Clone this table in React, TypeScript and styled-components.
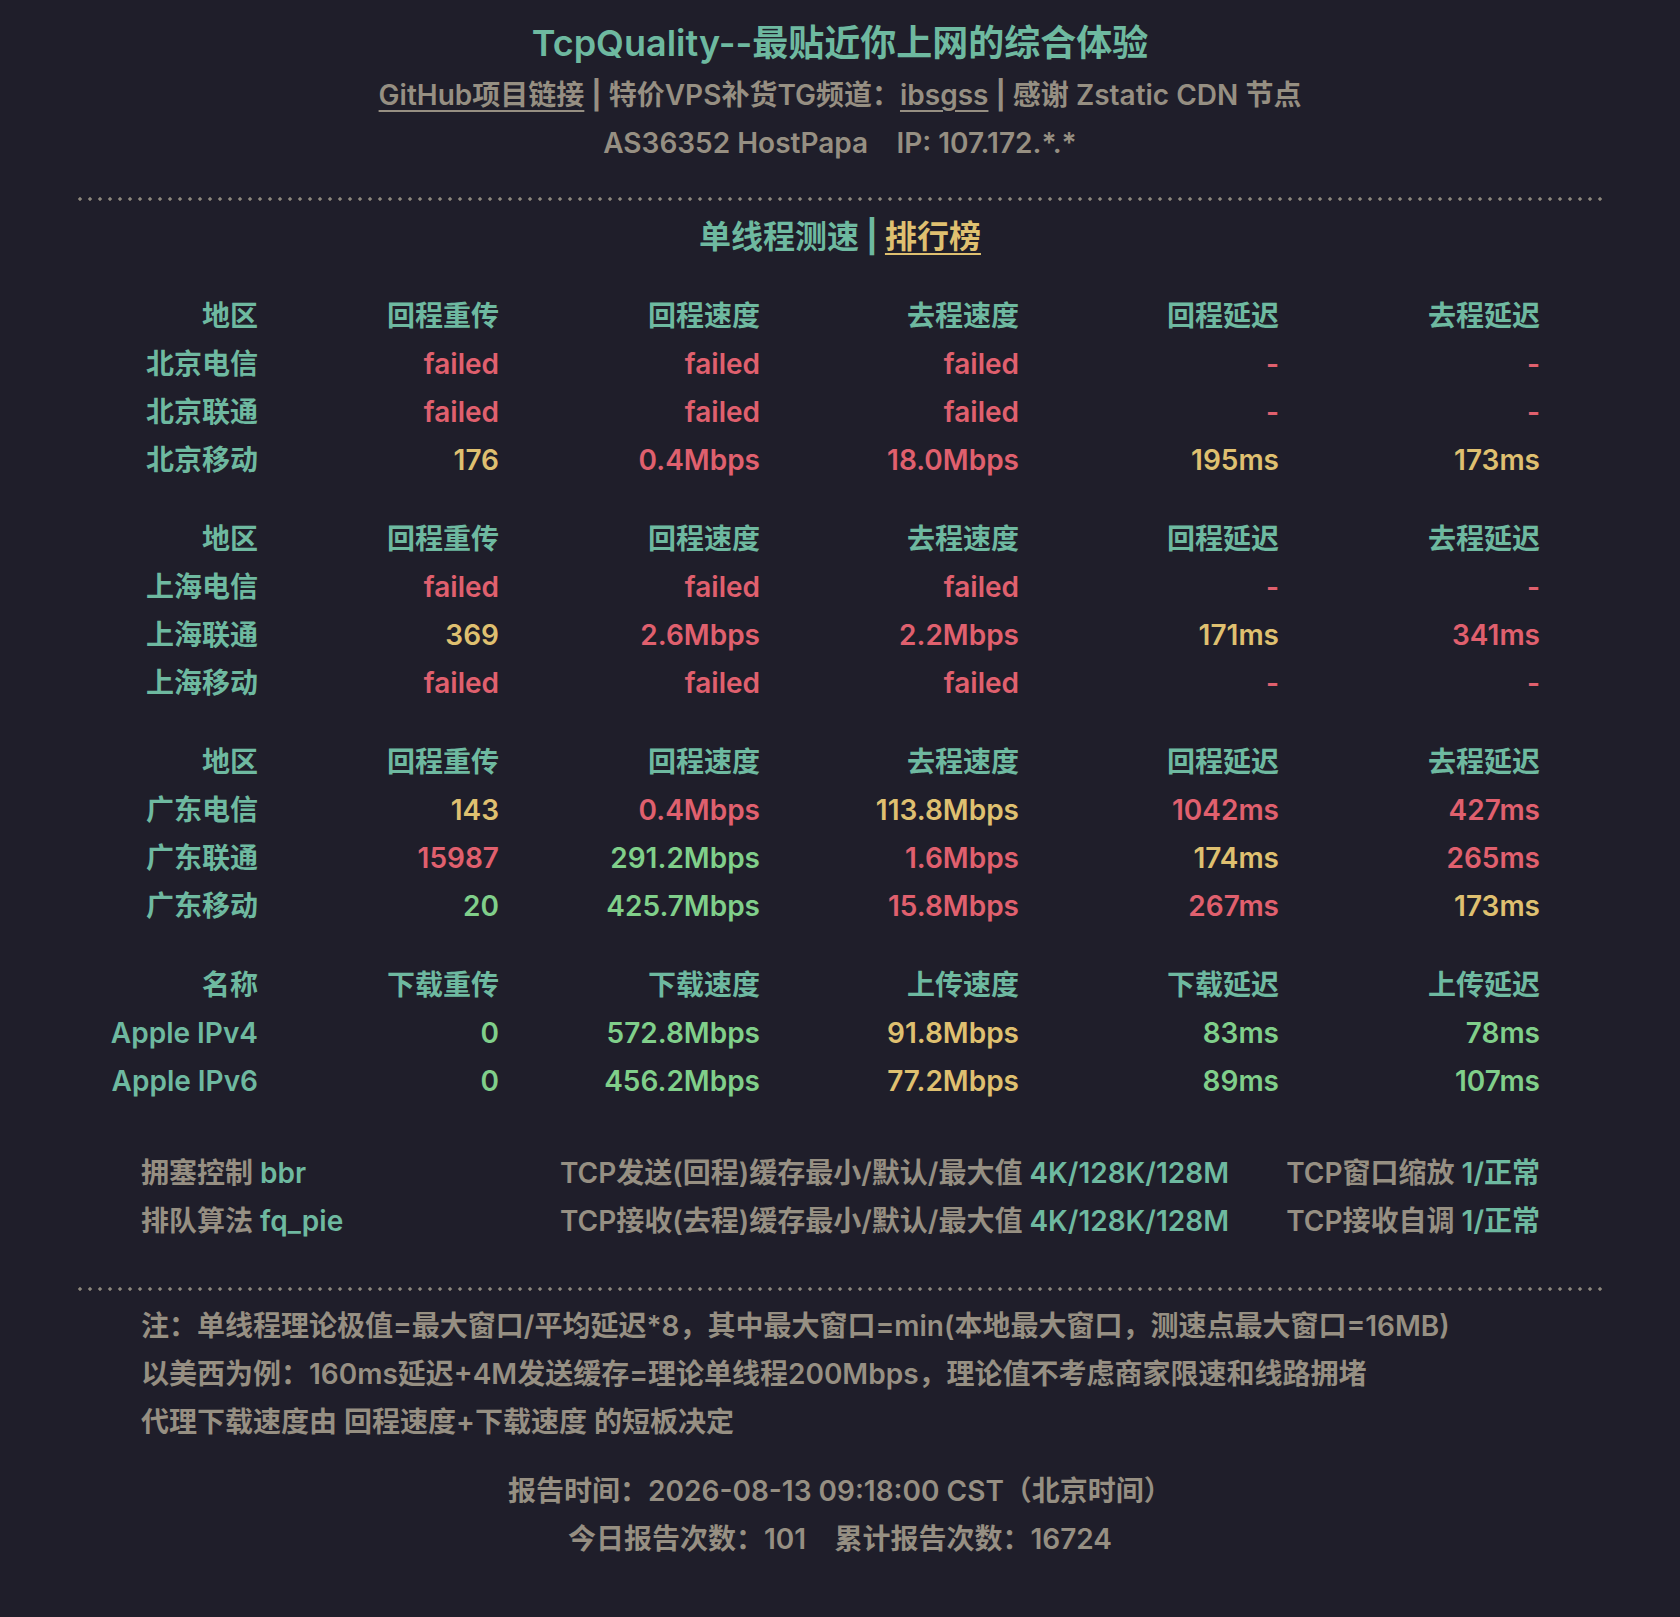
import React from "react";
import styled, { createGlobalStyle } from "styled-components";

const C = {
  bg: "#1f1e2a",
  teal: "#6eb9a0",
  red: "#e0606e",
  yellow: "#dfc070",
  green: "#80cf8a",
  gray: "#968f82",
};

type Tone = "teal" | "red" | "yellow" | "green" | "gray";

const GlobalStyle = createGlobalStyle`
  html, body {
    margin: 0;
    padding: 0;
    background: ${C.bg};
  }
  body {
    font-family: Inter, "Noto Sans CJK SC", sans-serif;
    font-weight: 600;
    -webkit-font-smoothing: antialiased;
  }
`;

const Page = styled.div`
  width: 1524px;
  margin: 0 auto;
  padding: 16px 0 36px;
`;

const Title = styled.h1`
  margin: 0;
  font-size: 36px;
  line-height: 55px;
  font-weight: 600;
  text-align: center;
  color: ${C.teal};
`;

const SubLine = styled.div`
  font-size: 28px;
  line-height: 48px;
  text-align: center;
  color: ${C.gray};
  white-space: pre;
`;

const Link = styled.a<{ $tone?: Tone }>`
  color: ${(p) => C[p.$tone ?? "gray"]};
  text-decoration: underline;
  text-decoration-thickness: 2px;
  text-underline-offset: 5px;
`;

const Sep = styled.span<{ $tone?: Tone }>`
  color: ${(p) => C[p.$tone ?? "gray"]};
  font-weight: 700;
  margin: 0 7px;
`;

const Divider = styled.div<{ $top: number }>`
  margin-top: ${(p) => p.$top}px;
  height: 4px;
  background-image: radial-gradient(circle at 2px 2px, #8d877b 1.4px, transparent 2px);
  background-size: 10px 4px;
  background-repeat: repeat-x;
`;

const SectionTitle = styled.h2`
  margin: 12px 0 0;
  font-size: 32px;
  line-height: 48px;
  font-weight: 600;
  text-align: center;
  color: ${C.teal};
`;

const Table = styled.div`
  display: grid;
  grid-template-columns: 180px 241px 261px 259px 260px 261px;
  margin-top: 31px;
  font-size: 28px;
  line-height: 48px;
  text-align: right;
  white-space: nowrap;
`;

const Cell = styled.div<{ $tone: Tone }>`
  color: ${(p) => C[p.$tone]};
`;

const InfoGrid = styled.div`
  display: grid;
  grid-template-columns: 419px 1fr auto;
  margin-top: 44px;
  padding: 0 62px 0 63px;
  font-size: 28px;
  line-height: 48px;
  color: ${C.gray};
  white-space: nowrap;
`;

const Val = styled.span`
  color: ${C.teal};
`;

const Notes = styled.div`
  margin-top: 11px;
  padding-left: 63px;
  font-size: 28px;
  line-height: 48px;
  color: ${C.gray};
`;

const Report = styled.div`
  margin-top: 21px;
  font-size: 28px;
  line-height: 48px;
  text-align: center;
  color: ${C.gray};
  white-space: pre;
`;

type Row = [string, ...[string, Tone][]];

type Block = { head: string[]; rows: Row[] };

const blocks: Block[] = [
  {
    head: ["地区", "回程重传", "回程速度", "去程速度", "回程延迟", "去程延迟"],
    rows: [
      ["北京电信", ["failed", "red"], ["failed", "red"], ["failed", "red"], ["-", "red"], ["-", "red"]],
      ["北京联通", ["failed", "red"], ["failed", "red"], ["failed", "red"], ["-", "red"], ["-", "red"]],
      ["北京移动", ["176", "yellow"], ["0.4Mbps", "red"], ["18.0Mbps", "red"], ["195ms", "yellow"], ["173ms", "yellow"]],
    ],
  },
  {
    head: ["地区", "回程重传", "回程速度", "去程速度", "回程延迟", "去程延迟"],
    rows: [
      ["上海电信", ["failed", "red"], ["failed", "red"], ["failed", "red"], ["-", "red"], ["-", "red"]],
      ["上海联通", ["369", "yellow"], ["2.6Mbps", "red"], ["2.2Mbps", "red"], ["171ms", "yellow"], ["341ms", "red"]],
      ["上海移动", ["failed", "red"], ["failed", "red"], ["failed", "red"], ["-", "red"], ["-", "red"]],
    ],
  },
  {
    head: ["地区", "回程重传", "回程速度", "去程速度", "回程延迟", "去程延迟"],
    rows: [
      ["广东电信", ["143", "yellow"], ["0.4Mbps", "red"], ["113.8Mbps", "yellow"], ["1042ms", "red"], ["427ms", "red"]],
      ["广东联通", ["15987", "red"], ["291.2Mbps", "green"], ["1.6Mbps", "red"], ["174ms", "yellow"], ["265ms", "red"]],
      ["广东移动", ["20", "green"], ["425.7Mbps", "green"], ["15.8Mbps", "red"], ["267ms", "red"], ["173ms", "yellow"]],
    ],
  },
  {
    head: ["名称", "下载重传", "下载速度", "上传速度", "下载延迟", "上传延迟"],
    rows: [
      ["Apple IPv4", ["0", "green"], ["572.8Mbps", "green"], ["91.8Mbps", "yellow"], ["83ms", "green"], ["78ms", "green"]],
      ["Apple IPv6", ["0", "green"], ["456.2Mbps", "green"], ["77.2Mbps", "yellow"], ["89ms", "green"], ["107ms", "green"]],
    ],
  },
];

function ResultTable({ block }: { block: Block }) {
  return (
    <Table>
      {block.head.map((h) => (
        <Cell key={h} $tone="teal">
          {h}
        </Cell>
      ))}
      {block.rows.map((row) => {
        const [name, ...vals] = row;
        return (
          <React.Fragment key={name}>
            <Cell $tone="teal">{name}</Cell>
            {vals.map(([v, t], i) => (
              <Cell key={i} $tone={t}>
                {v}
              </Cell>
            ))}
          </React.Fragment>
        );
      })}
    </Table>
  );
}

export default function App() {
  return (
    <>
      <GlobalStyle />
      <Page>
        <Title>TcpQuality--最贴近你上网的综合体验</Title>
        <SubLine>
          <Link href="#">GitHub项目链接</Link>
          <Sep>|</Sep>
          特价VPS补货TG频道：<Link href="#">ibsgss</Link>
          <Sep>|</Sep>
          感谢 Zstatic CDN 节点
        </SubLine>
        <SubLine>{"AS36352 HostPapa    IP: 107.172.*.*"}</SubLine>
        <Divider $top={30} />
        <SectionTitle>
          单线程测速
          <Sep $tone="teal">|</Sep>
          <Link href="#" $tone="yellow">
            排行榜
          </Link>
        </SectionTitle>
        {blocks.map((b, i) => (
          <ResultTable key={i} block={b} />
        ))}
        <InfoGrid>
          <div>
            拥塞控制 <Val>bbr</Val>
          </div>
          <div>
            TCP发送(回程)缓存最小/默认/最大值 <Val>4K/128K/128M</Val>
          </div>
          <div>
            TCP窗口缩放 <Val>1/正常</Val>
          </div>
          <div>
            排队算法 <Val>fq_pie</Val>
          </div>
          <div>
            TCP接收(去程)缓存最小/默认/最大值 <Val>4K/128K/128M</Val>
          </div>
          <div>
            TCP接收自调 <Val>1/正常</Val>
          </div>
        </InfoGrid>
        <Divider $top={42} />
        <Notes>
          <div>注：单线程理论极值=最大窗口/平均延迟*8，其中最大窗口=min(本地最大窗口，测速点最大窗口=16MB)</div>
          <div>以美西为例：160ms延迟+4M发送缓存=理论单线程200Mbps，理论值不考虑商家限速和线路拥堵</div>
          <div>代理下载速度由 回程速度+下载速度 的短板决定</div>
        </Notes>
        <Report>
          <div>报告时间：2026-08-13 09:18:00 CST（北京时间）</div>
          <div>{"今日报告次数：101    累计报告次数：16724"}</div>
        </Report>
      </Page>
    </>
  );
}
